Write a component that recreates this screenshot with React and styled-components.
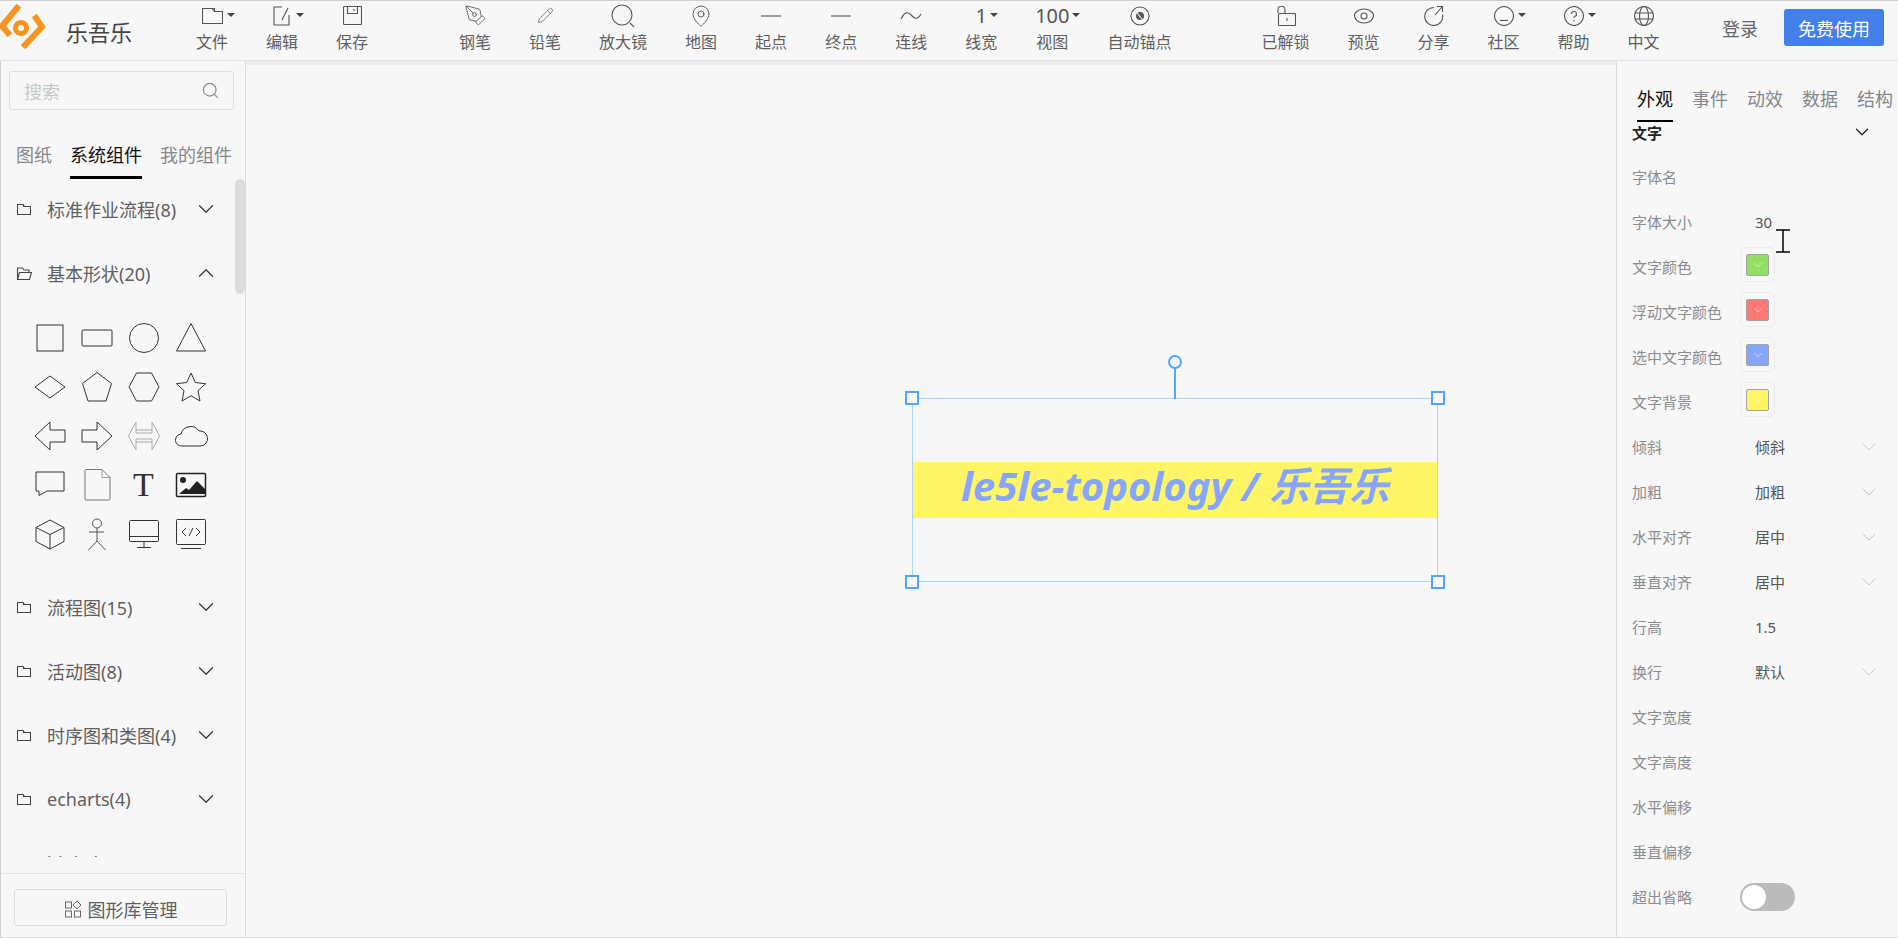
import React from "react";
import styled, { createGlobalStyle } from "styled-components";
import { ChevronDown, ChevronUp, PenTool, Pencil, MapPin, Search } from "lucide-react";

const Global = createGlobalStyle`
  html, body { margin: 0; padding: 0; height: 100%; background: #f7f7f7; overflow: hidden; }
  body { font-family: "Noto Sans", "Noto Sans CJK SC", "Liberation Sans", sans-serif; }
  * { box-sizing: border-box; }
`;

const Page = styled.div`
  width: 1898px; height: 938px; display: flex; flex-direction: column;
  background: #f7f7f7; border-top: 1px solid #cfcfcf; border-bottom: 1px solid #d8d8d8;
  overflow: hidden;
`;
const TopBar = styled.header`
  height: 60px; flex: none; display: flex; align-items: flex-start;
  border-bottom: 1px solid #e2e2e2; background: #f7f7f7;
`;
const Brand = styled.div`
  width: 177px; flex: none; height: 59px; position: relative; display: flex; align-items: center;
  padding-left: 66px; font-size: 22px; color: #444;
  svg { position: absolute; left: 0; top: -1px; }
`;
const ToolGroup = styled.div`
  display: flex; margin-left: ${p => p.$gap || 0}px;
`;
const Tool = styled.div`
  position: relative; padding: 0 19px; display: flex; flex-direction: column; align-items: center;
  color: #5f5f5f; font-size: 16px; line-height: 20px;
`;
const ToolIcon = styled.div`
  height: 31px; padding-bottom: 2px; display: flex; align-items: center; justify-content: center; position: relative;
  color: #555; font-size: ${p => p.$num ? "20px" : "16px"};
  svg { display: block; }
`;
const Caret = styled.span`
  position: absolute; top: 12px; width: 0; height: 0;
  border-left: 4px solid transparent; border-right: 4px solid transparent; border-top: 4px solid #444;
`;
const RightActions = styled.div`
  margin-left: auto; display: flex; align-items: center; height: 37px; margin-top: 8px; padding-right: 14px;
`;
const Login = styled.span`
  font-size: 18px; color: #666; margin-right: 26px;
`;
const PrimaryButton = styled.div`
  width: 100px; height: 37px; background: #4480ea; color: #fff; font-size: 18px; border-radius: 3px;
  display: flex; align-items: center; justify-content: center;
`;
const Body = styled.div`
  flex: 1; min-height: 0; display: flex;
`;
const Sidebar = styled.aside`
  width: 246px; flex: none; display: flex; flex-direction: column;
  border-left: 1px solid #cfcfcf; border-right: 1px solid #dcdcdc;
`;
const SearchBox = styled.div`
  margin: 10px 11px 0 8px; height: 39px; border: 1px solid #dedede; border-radius: 3px; flex: none;
  display: flex; align-items: center; justify-content: space-between; padding: 0 13px 0 14px;
  color: #c8c8c8; font-size: 18px;
  svg { color: #8a8a8a; }
`;
const SideTabs = styled.div`
  display: flex; gap: 18px; padding-left: 15px; margin-top: 32px; flex: none;
`;
const SideTab = styled.div`
  font-size: 18px; line-height: 26px; padding-bottom: 8px; flex: none;
  color: ${p => p.$active ? "#111" : "#85878c"};
  border-bottom: 3px solid ${p => p.$active ? "#000" : "transparent"};
`;
const Scroller = styled.div`
  flex: 1; min-height: 0; overflow: hidden; position: relative; margin-top: -2px;
`;
const Thumb = styled.div`
  position: absolute; right: 0; top: 2px; width: 10px; height: 115px; background: #dcdcdc; border-radius: 5px;
`;
const GroupRow = styled.div`
  height: 64px; display: flex; align-items: center; padding-left: 15px; color: #5f5f5f; font-size: 18px;
`;
const FolderSlot = styled.span`
  width: 16px; flex: none; display: flex; justify-content: center; color: #444;
`;
const GroupName = styled.span`
  margin-left: 15px; flex: 1; white-space: nowrap;
`;
const GroupChevron = styled.span`
  width: 26px; margin-right: 26px; display: flex; justify-content: center; color: #333;
`;
const ShapeGrid = styled.div`
  display: grid; grid-template-columns: repeat(4, 47px); grid-auto-rows: 49px; padding: 8px 0 17px 25px;
`;
const ShapeCell = styled.div`
  display: flex; align-items: center; justify-content: center; color: #333;
  font-family: "Liberation Serif", serif; font-size: 34px;
`;
const SideFooter = styled.div`
  flex: none; margin-top: 16px; border-top: 1px solid #e4e4e4; padding: 15px 18px 11px 13px;
`;
const LibButton = styled.div`
  height: 37px; padding-top: 2px; border: 1px solid #dcdcdc; border-radius: 3px; display: flex; align-items: center;
  justify-content: center; gap: 6px; font-size: 18px; color: #5f5f5f;
`;
const Canvas = styled.main`
  flex: 1; min-width: 0; position: relative; border-top: 4px solid #ececec; background: #f7f7f7;
`;
const Selection = styled.div`
  position: absolute; left: 666px; top: 333px; width: 526px; height: 184px;
  border: 1px solid #a9d5fb; display: flex; align-items: center;
`;
const TextBand = styled.div`
  width: 100%; height: 56px; padding-bottom: 12px; background: #fff566; color: #85a5ff; display: flex; align-items: center;
  justify-content: center; font-size: 40px; font-weight: 700; font-style: italic; white-space: nowrap;
`;
const Handle = styled.span`
  position: absolute; width: 14px; height: 14px; border: 2px solid #4fa8f8; background: #f7f7f7;
  ${p => p.$x === "l" ? "left: -8px;" : "right: -8px;"}
  ${p => p.$y === "t" ? "top: -8px;" : "bottom: -8px;"}
`;
const RotateStem = styled.span`
  position: absolute; left: 50%; top: -31px; width: 2px; height: 31px; margin-left: -1px; background: #4fa8f8;
`;
const RotateKnob = styled.span`
  position: absolute; left: 50%; top: -44px; width: 14px; height: 14px; margin-left: -7px;
  border: 2px solid #4fa8f8; border-radius: 50%; background: #f7f7f7;
`;
const Panel = styled.aside`
  width: 282px; flex: none; position: relative; border-left: 1px solid #dcdcdc; overflow: hidden;
`;
const PanelTabs = styled.div`
  display: flex; gap: 19px; padding: 25px 0 0 20px; white-space: nowrap;
`;
const PanelTab = styled.div`
  font-size: 18px; line-height: 26px; padding-bottom: 8px; flex: none;
  color: ${p => p.$active ? "#111" : "#85878c"};
  border-bottom: 2px solid ${p => p.$active ? "#000" : "transparent"};
`;
const SectionHead = styled.div`
  height: 32px; padding: 0 25px 12px 15px; display: flex; align-items: center; justify-content: space-between;
  font-size: 15px; font-weight: 700; color: #222;
  svg { color: #222; }
`;
const PropRow = styled.div`
  height: 45px; display: flex; align-items: center; padding: 0 17px 0 15px;
`;
const PropLabel = styled.div`
  width: 108px; flex: none; font-size: 15px; color: #8b8c90; white-space: nowrap;
`;
const PropValue = styled.div`
  flex: 1; display: flex; align-items: center; justify-content: space-between; padding-left: 15px;
  font-size: 15px; color: #555;
  svg { color: #bdbdbd; }
`;
const SwatchBox = styled.div`
  width: 35px; height: 35px; border: 1px solid #ececec; border-radius: 5px; margin-top: -4px;
  display: flex; align-items: center; justify-content: center;
`;
const Swatch = styled.div`
  width: 23px; height: 22px; background: ${p => p.$c}; border: 1px solid #a3a3a3; border-radius: 2px;
  display: flex; align-items: center; justify-content: center; color: #fff;
`;
const Toggle = styled.div`
  width: 55px; height: 28px; border-radius: 14px; background: #bbb; padding: 2px; display: flex;
`;
const Knob = styled.div`
  width: 24px; height: 24px; border-radius: 50%; background: #fff;
`;
const TextCursor = styled.svg`
  position: absolute; left: 159px; top: 168px;
`;

const Line = ({ w = 20, h = 20, vb, children, sw = 1.1 }) => (
  <svg width={w} height={h} viewBox={vb || `0 0 ${w} ${h}`} fill="none" stroke="currentColor" strokeWidth={sw}>{children}</svg>
);

const Logo = () => (
  <svg width="50" height="50" viewBox="0 0 50 50" fill="none" stroke="#f7941d" strokeWidth="6" strokeLinecap="square">
    <path d="M17 8 L2 26 L8 33" />
    <path d="M36 18 L42 27 L25 45" />
    <circle cx="21" cy="28" r="5.5" strokeWidth="5" />
  </svg>
);

const icons = {
  folder: <Line w={21} h={17}><path d="M.5 1.5h12v3h8v12H.5zM12.5 4.5l-2.500-3" /></Line>,
  edit: <Line w={18} h={20}><path d="M9 1H1v18h15v-10M15 2L9 14" /></Line>,
  save: <Line w={19} h={19}><path d="M1.500.5h16a1 1 0 0 1 1 1v16a1 1 0 0 1-1 1h-16a1 1 0 0 1-1-1v-16a1 1 0 0 1 1-1zM4.500.5v7h10v-7M11 3v2" /></Line>,
  pen: <PenTool size={23} strokeWidth={0.9} />,
  pencil: <Pencil size={17} strokeWidth={1} />,
  zoom: <Line w={26} h={24}><circle cx="12" cy="11" r="10" /><path d="M20 19l4 4" /></Line>,
  pin: <MapPin size={24} strokeWidth={0.9} />,
  dash: <Line w={20} h={4}><path d="M0 2h20" /></Line>,
  wave: <Line w={22} h={12}><path d="M1 9C5 1 8 2 11 5s6 6 10-1" /></Line>,
  anchor: <Line w={20} h={20}><circle cx="10" cy="10" r="9" /><circle cx="10" cy="10" r="4" fill="currentColor" stroke="none" /><path d="M5 4l9 12" stroke="#f7f7f7" /></Line>,
  lock: <Line w={21} h={20}><rect x="3.500" y="7.500" width="17" height="12" rx="1" /><path d="M3 7V4a3.500 3.500 0 0 1 7-.5v4M12 12v3" /></Line>,
  eye: <Line w={20} h={16}><ellipse cx="10" cy="8" rx="9.500" ry="7" /><circle cx="10" cy="8" r="3" /></Line>,
  share: <Line w={20} h={21}><path d="M10 2.500a9 9 0 1 0 8.500 7M11 10l7-8M13 1.500h5.500V7" /></Line>,
  smile: <Line w={20} h={20}><circle cx="10" cy="10" r="9.500" /><path d="M6 14.500h8" /></Line>,
  help: <Line w={20} h={20}><circle cx="10" cy="10" r="9.500" /><path d="M7.500 8a2.500 2.500 0 1 1 3.500 2.300c-.8.4-1 .9-1 1.700M10 14v1.500" /></Line>,
  globe: <Line w={20} h={20}><circle cx="10" cy="10" r="9.500" /><ellipse cx="10" cy="10" rx="4.500" ry="9.500" /><path d="M1 7h18M1 13h18" /></Line>,
};

const tools1 = [
  { l: "文件", i: icons.folder, c: 15 }, { l: "编辑", i: icons.edit, c: 14 }, { l: "保存", i: icons.save },
];
const tools2 = [
  { l: "钢笔", i: icons.pen }, { l: "铅笔", i: icons.pencil }, { l: "放大镜", i: icons.zoom },
  { l: "地图", i: icons.pin }, { l: "起点", i: icons.dash }, { l: "终点", i: icons.dash },
  { l: "连线", i: icons.wave }, { l: "线宽", n: "1", c: 9 }, { l: "视图", n: "100", c: 20 }, { l: "自动锚点", i: icons.anchor },
];
const tools3 = [
  { l: "已解锁", i: icons.lock }, { l: "预览", i: icons.eye }, { l: "分享", i: icons.share },
  { l: "社区", i: icons.smile, c: 14 }, { l: "帮助", i: icons.help, c: 14 }, { l: "中文", i: icons.globe },
];

const ToolItem = ({ t }) => (
  <Tool>
    <ToolIcon $num={!!t.n}>
      {t.i || t.n}
      {t.c != null && <Caret style={{ left: `calc(50% + ${t.c}px)` }} />}
    </ToolIcon>
    {t.l}
  </Tool>
);

const FolderClosed = () => (
  <Line w={14} h={12}><path d="M.5 1.500h5.500l1.500 2h6v8h-13z" /><path d="M6.500 1.500v2h1" /></Line>
);
const FolderOpen = () => (
  <Line w={16} h={13}><path d="M1.500 12.500V1h5l1.500 2h5v2.500M1.500 12.500l2-7h12l-2 7z" /></Line>
);

const S = { fill: "none", stroke: "currentColor", strokeWidth: 1 };
const Sh = ({ children }) => <svg width="34" height="34" viewBox="0 0 34 34" {...S}>{children}</svg>;
const shapes = [
  <Sh><rect x="4" y="4" width="26" height="26" /></Sh>,
  <Sh><rect x="2" y="9" width="30" height="16" rx="1" /></Sh>,
  <Sh><circle cx="17" cy="17" r="14.500" /></Sh>,
  <Sh><path d="M17 2.500L31.500 30h-29z" /></Sh>,
  <Sh><path d="M2 17L17 6l15 11-15 11z" /></Sh>,
  <Sh><path d="M17 2.500L31.500 13.500 26 31H8L2.500 13.500z" /></Sh>,
  <Sh><path d="M9.500 3h15L32 17l-7.500 14h-15L2 17z" /></Sh>,
  <Sh><path d="M17 3l4.300 9.500 10.200 1.200-7.500 7 2 10.300-9-5.200-9 5.200 2-10.300-7.500-7 10.200-1.200z" strokeLinejoin="round" /></Sh>,
  <Sh><path d="M2 17L17 3v8h15v12H17v8z" /></Sh>,
  <Sh><path d="M32 17L17 3v8H2v12h15v8z" /></Sh>,
  <svg width="34" height="34" viewBox="0 0 34 34" fill="none" stroke="#aaa" strokeWidth="1"><path d="M1.500 17L9 3v8h16V3l7.500 14L25 31v-8H9v8zM9 11v3h16v-3M9 23v-3h16v3" /></svg>,
  <Sh><path d="M8 27a6 6 0 0 1-1-12 10 10 0 0 1 18-3 7.500 7.500 0 0 1 2 15z" strokeLinejoin="round" /></Sh>,
  <Sh><path d="M3 4h28v19H14l-8 4.500V23H3z" /></Sh>,
  <svg width="34" height="34" viewBox="0 0 34 34" fill="none" stroke="#777" strokeWidth="1"><path d="M6 1.500h16l8 8V31a1 1 0 0 1-1 1H6a1 1 0 0 1-1-1V2.500a1 1 0 0 1 1-1z" /><path d="M22 1.500v8h8" stroke="#999" /></svg>,
  "T",
  <svg width="34" height="34" viewBox="0 0 34 34"><rect x="2.500" y="5.500" width="29" height="23" rx="1" fill="none" stroke="#222" strokeWidth="1.500" /><circle cx="9" cy="12" r="3" fill="#222" /><path d="M5 26l7-6 3 2 8-9 8 8v5z" fill="#222" /></svg>,
  <Sh><path d="M17 3l14 7.500v14L17 32 3 24.500v-14zM3 10.500l14 7 14-7M17 17.500V32" /></Sh>,
  <svg width="34" height="34" viewBox="0 0 34 34" fill="none" stroke="#555" strokeWidth="1"><circle cx="17" cy="6.500" r="4.500" /><path d="M17 11v14M9 15h15M17 24L8.500 33M17 24l8.500 9" /></svg>,
  <Sh><rect x="2.500" y="3.500" width="29" height="21" rx="1" /><path d="M2.500 19.500h29M17 24.500V30M10 30.500h14" /></Sh>,
  <Sh><rect x="2.500" y="2.500" width="29" height="25" rx="1" /><path d="M12 11l-4 4 4 4M22 11l4 4-4 4M15 19l4-8M7 31.500h20" /></Sh>,
];

const Row = ({ label, children }) => (
  <PropRow><PropLabel>{label}</PropLabel>{children}</PropRow>
);
const ColorRow = ({ label, c }) => (
  <Row label={label}>
    <SwatchBox><Swatch $c={c}><ChevronDown size={14} strokeWidth={1} /></Swatch></SwatchBox>
  </Row>
);
const SelectRow = ({ label, v }) => (
  <Row label={label}><PropValue>{v}<ChevronDown size={24} strokeWidth={0.8} /></PropValue></Row>
);
const ValueRow = ({ label, v }) => (
  <Row label={label}><PropValue>{v}</PropValue></Row>
);

const Group = ({ name, open }) => (
  <GroupRow>
    <FolderSlot>{open ? <FolderOpen /> : <FolderClosed />}</FolderSlot>
    <GroupName>{name}</GroupName>
    <GroupChevron>{open ? <ChevronUp size={26} strokeWidth={1.1} /> : <ChevronDown size={26} strokeWidth={1.1} />}</GroupChevron>
  </GroupRow>
);

export default function App() {
  return (
    <Page>
      <Global />
      <TopBar>
        <Brand><Logo />乐吾乐</Brand>
        <ToolGroup>{tools1.map(t => <ToolItem key={t.l} t={t} />)}</ToolGroup>
        <ToolGroup $gap={53}>{tools2.map(t => <ToolItem key={t.l} t={t} />)}</ToolGroup>
        <ToolGroup $gap={52}>{tools3.map(t => <ToolItem key={t.l} t={t} />)}</ToolGroup>
        <RightActions>
          <Login>登录</Login>
          <PrimaryButton>免费使用</PrimaryButton>
        </RightActions>
      </TopBar>
      <Body>
        <Sidebar>
          <SearchBox>搜索<Search size={19} strokeWidth={1.5} /></SearchBox>
          <SideTabs>
            <SideTab>图纸</SideTab>
            <SideTab $active>系统组件</SideTab>
            <SideTab>我的组件</SideTab>
          </SideTabs>
          <Scroller>
            <Thumb />
            <Group name="标准作业流程(8)" />
            <Group name="基本形状(20)" open />
            <ShapeGrid>
              {shapes.map((s, i) => <ShapeCell key={i}>{s}</ShapeCell>)}
            </ShapeGrid>
            <Group name="流程图(15)" />
            <Group name="活动图(8)" />
            <Group name="时序图和类图(4)" />
            <Group name="echarts(4)" />
            <Group name="highcharts(4)" />
          </Scroller>
          <SideFooter>
            <LibButton>
              <svg width="18" height="18" viewBox="0 0 18 18" fill="none" stroke="#666" strokeWidth="1">
                <rect x="1.500" y="2" width="6" height="6" />
                <path d="M13 1l4 4-4 4-4-4z" />
                <rect x="1.500" y="11" width="6" height="6" />
                <rect x="10.500" y="11" width="6" height="6" />
              </svg>
              图形库管理
            </LibButton>
          </SideFooter>
        </Sidebar>
        <Canvas>
          <Selection>
            <RotateStem />
            <RotateKnob />
            <Handle $x="l" $y="t" />
            <Handle $x="r" $y="t" />
            <Handle $x="l" $y="b" />
            <Handle $x="r" $y="b" />
            <TextBand>le5le-topology / 乐吾乐</TextBand>
          </Selection>
        </Canvas>
        <Panel>
          <PanelTabs>
            <PanelTab $active>外观</PanelTab>
            <PanelTab>事件</PanelTab>
            <PanelTab>动效</PanelTab>
            <PanelTab>数据</PanelTab>
            <PanelTab>结构</PanelTab>
          </PanelTabs>
          <SectionHead>文字<ChevronDown size={22} strokeWidth={1.4} /></SectionHead>
          <Row label="字体名" />
          <ValueRow label="字体大小" v="30" />
          <ColorRow label="文字颜色" c="#95de64" />
          <ColorRow label="浮动文字颜色" c="#ff7875" />
          <ColorRow label="选中文字颜色" c="#85a5ff" />
          <ColorRow label="文字背景" c="#fff566" />
          <SelectRow label="倾斜" v="倾斜" />
          <SelectRow label="加粗" v="加粗" />
          <SelectRow label="水平对齐" v="居中" />
          <SelectRow label="垂直对齐" v="居中" />
          <ValueRow label="行高" v="1.5" />
          <SelectRow label="换行" v="默认" />
          <Row label="文字宽度" />
          <Row label="文字高度" />
          <Row label="水平偏移" />
          <Row label="垂直偏移" />
          <Row label="超出省略"><Toggle><Knob /></Toggle></Row>
          <TextCursor width="14" height="24" viewBox="0 0 14 24" fill="none" stroke="#000" strokeWidth="1.5">
            <path d="M0 1h14M0 23h14M7 1v22" />
          </TextCursor>
        </Panel>
      </Body>
    </Page>
  );
}
